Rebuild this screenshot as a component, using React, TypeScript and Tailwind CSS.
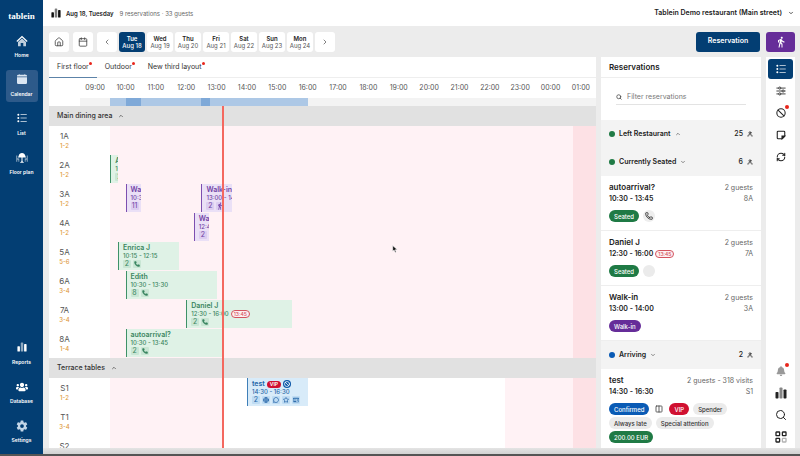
import type { ReactNode } from "react";
import {
  Ban,
  Calendar,
  ChevronDown,
  ChevronLeft,
  ChevronRight,
  ChevronUp,
  Columns2,
  Globe,
  House,
  MessageCircle,
  Phone,
  RefreshCw,
  Search,
  Star,
} from "lucide-react";
import { BsCalendarFill } from "react-icons/bs";
import { FaBell, FaRegIdCard, FaUsers } from "react-icons/fa";
import { FiUser } from "react-icons/fi";
import { IoSettingsSharp } from "react-icons/io5";
import { MdDirectionsWalk } from "react-icons/md";

type Tone = "green" | "purple" | "blue";

interface Booking {
  name: string;
  time: string;
  guests: number;
  start: number;
  end: number;
  tone: Tone;
  icons?: ReactNode;
  late?: string;
  vip?: boolean;
}

interface TableRow {
  name: string;
  seats: string;
  bookings?: Booking[];
}

const FIRST_HOUR = 9;
const HOURS = 17;
const NOW = 13.7;

const toneClasses: Record<Tone, string> = {
  green: "bg-[#dff2e6] text-[#3a8560]",
  purple: "bg-[#eae0f6] text-[#7142a5]",
  blue: "bg-[#d8ebf9] text-[#2566a8]",
};

const edgeClasses: Record<Tone, string> = {
  green: "bg-[#3f9168]",
  purple: "bg-[#7d4fb0]",
  blue: "bg-[#3f7fb8]",
};

const chipClasses: Record<Tone, string> = {
  green: "bg-[#c9e6d4]",
  purple: "bg-[#dccdf0]",
  blue: "bg-[#bfdcf3]",
};

const phone = <Phone className="size-1.5" fill="currentColor" />;

const mainTables: TableRow[] = [
  { name: "1A", seats: "1-2" },
  {
    name: "2A",
    seats: "1-2",
    bookings: [{ name: "A", time: "10:00", guests: 2, start: 10, end: 10.25, tone: "green" }],
  },
  {
    name: "3A",
    seats: "1-2",
    bookings: [
      { name: "Walk-in", time: "10:30 - 11:00", guests: 11, start: 10.5, end: 11, tone: "purple" },
      {
        name: "Walk-in",
        time: "13:00 - 14:00",
        guests: 2,
        start: 13,
        end: 14,
        tone: "purple",
        icons: <MdDirectionsWalk className="size-2" />,
      },
    ],
  },
  {
    name: "4A",
    seats: "1-2",
    bookings: [
      { name: "Walk-in", time: "12:45 - 13:15", guests: 2, start: 12.75, end: 13.25, tone: "purple" },
    ],
  },
  {
    name: "5A",
    seats: "5-6",
    bookings: [
      { name: "Enrica J", time: "10:15 - 12:15", guests: 2, start: 10.25, end: 12.25, tone: "green", icons: phone },
    ],
  },
  {
    name: "6A",
    seats: "3-4",
    bookings: [
      { name: "Edith", time: "10:30 - 13:30", guests: 8, start: 10.5, end: 13.5, tone: "green", icons: phone },
    ],
  },
  {
    name: "7A",
    seats: "3-4",
    bookings: [
      {
        name: "Daniel J",
        time: "12:30 - 16:00",
        guests: 2,
        start: 12.5,
        end: 16,
        tone: "green",
        icons: phone,
        late: "13:45",
      },
    ],
  },
  {
    name: "8A",
    seats: "1-4",
    bookings: [
      { name: "autoarrival?", time: "10:30 - 13:45", guests: 2, start: 10.5, end: NOW, tone: "green", icons: phone },
    ],
  },
];

const terraceTables: TableRow[] = [
  {
    name: "S1",
    seats: "1-2",
    bookings: [
      { name: "test", time: "14:30 - 16:30", guests: 2, start: 14.5, end: 16.5, tone: "blue", vip: true },
    ],
  },
  { name: "T1", seats: "3-4" },
  { name: "S2", seats: "1-2" },
];

const days = [
  ["Tue", "Aug 18"],
  ["Wed", "Aug 19"],
  ["Thu", "Aug 20"],
  ["Fri", "Aug 21"],
  ["Sat", "Aug 22"],
  ["Sun", "Aug 23"],
  ["Mon", "Aug 24"],
];

function span(start: number, end: number) {
  return {
    left: `${((start - FIRST_HOUR) / HOURS) * 100}%`,
    width: `${((end - start) / HOURS) * 100}%`,
  };
}

function BarsIcon({ className = "" }: { className?: string }) {
  return (
    <svg viewBox="0 0 12 12" className={className} fill="currentColor">
      <rect x="0.5" y="5" width="3" height="6.5" rx="0.8" />
      <rect x="4.5" y="0.5" width="3" height="11" rx="0.8" opacity="0.55" />
      <rect x="8.5" y="2.5" width="3" height="9" rx="0.8" />
    </svg>
  );
}

function ListIcon({ className = "" }: { className?: string }) {
  return (
    <svg viewBox="0 0 12 12" className={className} fill="currentColor">
      <circle cx="1.6" cy="2" r="1.2" />
      <circle cx="1.6" cy="6" r="1.2" />
      <circle cx="1.6" cy="10" r="1.2" />
      <rect x="4.2" y="1.6" width="7.5" height="0.8" />
      <rect x="4.2" y="5.6" width="7.5" height="0.8" />
      <rect x="4.2" y="9.6" width="7.5" height="0.8" />
    </svg>
  );
}

function HomeIcon({ className = "" }: { className?: string }) {
  return (
    <svg viewBox="0 0 12 12" className={className} fill="currentColor">
      <path d="M6 .8 11.6 6l-.8.9L6 2.6 1.2 6.9.4 6z" />
      <path d="M6 3.6 10 7v4.2H7.3V8H4.7v3.2H2V7z" opacity="0.75" />
    </svg>
  );
}

function FloorIcon({ className = "" }: { className?: string }) {
  return (
    <svg viewBox="0 0 12 12" className={className} fill="currentColor">
      <path d="M6 1c1.8 0 2.8 1 3.2 2.4L10 5.6H6.5v3.6l1.7 1.5H3.8l1.7-1.5V5.6H2l.8-2.2C3.2 2 4.2 1 6 1z" />
      <path d="M.4 3.5h.8v3h2v3.3h-.7V7.4H1.2v2.4H.4zM11.6 3.5h-.8v3h-2v3.3h.7V7.4h1.3v2.4h.8z" opacity="0.7" />
    </svg>
  );
}

function TilesIcon({ className = "" }: { className?: string }) {
  return (
    <svg viewBox="0 0 12 12" className={className} fill="none" stroke="currentColor" strokeWidth="1.3">
      <rect x="1" y="1" width="3.6" height="3.6" rx="0.4" />
      <rect x="7.4" y="1" width="3.6" height="3.6" rx="0.4" />
      <rect x="1" y="7.4" width="3.6" height="3.6" rx="0.4" />
      <rect x="7.4" y="7.4" width="3.6" height="3.6" rx="0.4" opacity="0.35" />
    </svg>
  );
}

function SlidersIcon({ className = "" }: { className?: string }) {
  return (
    <svg viewBox="0 0 12 12" className={className} fill="white" stroke="currentColor">
      <path d="M.5 2.5h11M.5 6h11M.5 9.5h11" />
      <circle cx="4.5" cy="2.5" r="1.3" />
      <circle cx="8.5" cy="6" r="1.3" />
      <circle cx="4.5" cy="9.5" r="1.3" />
    </svg>
  );
}

function NoteIcon({ className = "" }: { className?: string }) {
  return (
    <svg viewBox="0 0 12 12" className={className} fill="none" stroke="currentColor" strokeWidth="1.3">
      <path d="M1.5 2.5a1 1 0 0 1 1-1h7a1 1 0 0 1 1 1v5l-3 3h-5a1 1 0 0 1-1-1z" />
      <path d="M7.2 10.5V7.2h3.3z" fill="currentColor" />
    </svg>
  );
}

function NavItem({ icon, label, active }: { icon: ReactNode; label: string; active?: boolean }) {
  return (
    <button
      className={`flex h-8 w-8 flex-col items-center justify-between rounded-[3px] py-1 text-[5px] leading-2 font-semibold whitespace-nowrap text-white ${
        active ? "bg-[#2d5a8a]" : ""
      }`}
    >
      {icon}
      <span>{label}</span>
    </button>
  );
}

function Sidebar() {
  return (
    <nav className="flex w-[43px] shrink-0 flex-col items-center justify-between bg-[#033e73] pt-2 pb-1.5">
      <div className="flex flex-col items-center gap-[7px]">
        <div className="font-['Liberation_Serif',serif] text-[9px] leading-4 font-bold text-white">
          tablein
        </div>
        <NavItem icon={<HomeIcon className="size-3" />} label="Home" />
        <NavItem icon={<BsCalendarFill className="size-2.5 text-[#dbe6f2]" />} label="Calendar" active />
        <NavItem icon={<ListIcon className="size-2.5" />} label="List" />
        <NavItem icon={<FloorIcon className="size-3" />} label="Floor plan" />
      </div>
      <div className="flex flex-col items-center gap-[7px]">
        <NavItem icon={<BarsIcon className="size-2.5" />} label="Reports" />
        <NavItem icon={<FaUsers className="size-3" />} label="Database" />
        <NavItem icon={<IoSettingsSharp className="size-3 text-[#c3d6e8]" />} label="Settings" />
      </div>
    </nav>
  );
}

function TopBar() {
  return (
    <header className="flex h-[26px] shrink-0 items-center bg-white pr-1.5 pl-2 text-[6px]">
      <BarsIcon className="mr-[5px] size-2.5 text-[#111]" />
      <span className="font-semibold text-[#222]">Aug 18, Tuesday</span>
      <span className="ml-1.5 text-[#666]">9 reservations · 33 guests</span>
      <button className="ml-auto flex items-center gap-1.5 text-[7px] font-semibold text-[#222]">
        Tablein Demo restaurant (Main street)
        <ChevronDown className="size-1.5" strokeWidth={3} />
      </button>
    </header>
  );
}

function Toolbar() {
  const square = "grid size-5 place-items-center rounded-[3px] bg-white text-[#444]";
  return (
    <div className="flex h-[31px] shrink-0 items-center pr-[5px] pl-1.5">
      <button className={square} aria-label="Home">
        <House className="size-2.5" />
      </button>
      <button className={`${square} ml-1`} aria-label="Pick a date">
        <Calendar className="size-2.5" />
      </button>
      <div className="ml-1 flex gap-0.5">
        <button className={square} aria-label="Previous">
          <ChevronLeft className="size-2" />
        </button>
        {days.map(([day, date], i) => (
          <button
            key={date}
            className={`flex h-5 w-[26px] flex-col items-center justify-center rounded-[3px] text-[6px] leading-[7px] whitespace-nowrap ${
              i === 0 ? "bg-[#033e73] font-medium text-white" : "bg-white text-[#555]"
            }`}
          >
            <b className={i === 0 ? "font-semibold" : "font-semibold text-[#222]"}>{day}</b>
            <span>{date}</span>
          </button>
        ))}
        <button className={square} aria-label="Next">
          <ChevronRight className="size-2" />
        </button>
      </div>
      <button className="ml-auto h-5 w-16 rounded-[3px] bg-[#033e73] text-[7px] font-semibold text-white">
        Reservation
      </button>
      <button
        aria-label="Add walk-in"
        className="ml-1.5 grid h-5 w-[29px] place-items-center rounded-[3px] bg-[#662d99] text-white"
      >
        <MdDirectionsWalk className="size-3" />
      </button>
    </div>
  );
}

function Late({ children }: { children: ReactNode }) {
  return (
    <span className="rounded-full border border-[#d4545f] bg-[#fdf0f1] px-0.5 text-[5px] leading-1.5 font-medium text-[#d4545f]">
      {children}
    </span>
  );
}

function BookingCard({ booking }: { booking: Booking }) {
  const chip = `grid h-2 min-w-2 place-items-center rounded-[1px] ${chipClasses[booking.tone]}`;
  return (
    <div
      className={`absolute top-0 h-7 overflow-hidden pt-0.5 pl-[5px] text-[7px] leading-2 whitespace-nowrap ${toneClasses[booking.tone]}`}
      style={span(booking.start, booking.end)}
    >
      <i className={`absolute inset-y-0 left-0 w-px ${edgeClasses[booking.tone]}`} />
      <div className="flex items-center gap-0.5 font-semibold">
        {booking.name}
        {booking.vip && (
          <>
            <span className="rounded-full bg-[#d01030] px-[3px] text-[5px] leading-[7px] text-white">VIP</span>
            <span className="grid size-2 place-items-center rounded-full bg-[#0b57a8] text-white">
              <Ban className="size-1.5" strokeWidth={3} />
            </span>
          </>
        )}
      </div>
      <div className="flex items-center gap-0.5 text-[6px] font-medium">
        {booking.time}
        {booking.late && <Late>{booking.late}</Late>}
      </div>
      <div className="flex gap-0.5">
        <span className={chip}>{booking.guests}</span>
        {booking.icons && <span className={chip}>{booking.icons}</span>}
        {booking.vip && (
          <>
            <span className={chip}><Globe className="size-1.5" strokeWidth={3} /></span>
            <span className={chip}><MessageCircle className="size-1.5" strokeWidth={3} /></span>
            <span className={chip}><Star className="size-1.5" strokeWidth={3} /></span>
            <span className={chip}><FaRegIdCard className="size-1.5" /></span>
          </>
        )}
      </div>
    </div>
  );
}

interface Shade {
  start: number;
  end: number;
  className: string;
}

const mainShades: Shade[] = [
  { start: 10, end: 25.25, className: "bg-[#fff2f5]" },
  { start: 25.25, end: 26, className: "bg-[#fde1e5]" },
];

const terraceShades: Shade[] = [
  { start: 10, end: NOW, className: "bg-[#fff2f5]" },
  { start: 23, end: 25.25, className: "bg-[#fff2f5]" },
  { start: 25.25, end: 26, className: "bg-[#fde1e5]" },
];

function Area({ title, tables, shades }: { title: string; tables: TableRow[]; shades: Shade[] }) {
  return (
    <section>
      <button className="flex h-5 w-full items-center gap-1.5 bg-[#e1e1e1] px-2 text-[7px] font-medium text-[#333]">
        {title}
        <ChevronUp className="size-1.5" strokeWidth={2.5} />
      </button>
      {tables.map((table) => (
        <div key={table.name} className="flex h-[29px]">
          <div className="w-[31px] shrink-0 pt-1.5 text-center text-[8px] leading-[9px] text-[#555]">
            {table.name}
            <div className="text-[6px] font-medium text-[#e09a3e]">{table.seats}</div>
          </div>
          <div className="relative flex-1">
            {shades.map((shade) => (
              <div
                key={shade.start}
                className={`absolute inset-y-0 ${shade.className}`}
                style={span(shade.start, shade.end)}
              />
            ))}
            {table.bookings?.map((booking) => (
              <BookingCard key={booking.start} booking={booking} />
            ))}
          </div>
        </div>
      ))}
    </section>
  );
}

function Schedule() {
  const floors = ["First floor", "Outdoor", "New third layout"];
  return (
    <main className="flex min-w-0 flex-1 flex-col overflow-hidden bg-white">
      <div className="flex h-[21px] shrink-0 border-b border-[#eee] text-[7px] text-[#333]">
        {floors.map((floor, i) => (
          <button
            key={floor}
            className={`relative px-2 pt-px ${i === 0 ? "shadow-[0_1px_0_#5c83a8]" : ""}`}
          >
            {floor}
            <i className="absolute top-[5px] right-[5px] size-[3px] rounded-full bg-[#e8261c]" />
          </button>
        ))}
      </div>
      <div className="flex h-5 shrink-0 items-center pl-[31px] text-[7px] text-[#555]">
        {Array.from({ length: HOURS }, (_, i) => (
          <span key={i} className="flex w-0 flex-1 justify-center">
            {String((FIRST_HOUR + i) % 24).padStart(2, "0")}:00
          </span>
        ))}
      </div>
      <div className="flex h-2 shrink-0">
        <div className="w-[31px]" />
        <div className="relative flex-1 bg-[#f3f3f3]">
          <div className="absolute inset-y-0 bg-[#adc8e6]" style={span(10, 16.5)} />
          <div className="absolute inset-y-0 bg-[#7fa9d8]" style={span(10.5, 11)} />
          <div className="absolute inset-y-0 bg-[#7fa9d8]" style={span(13, 13.27)} />
        </div>
      </div>
      <div className="relative min-h-0 flex-1 overflow-hidden">
        <Area title="Main dining area" tables={mainTables} shades={mainShades} />
        <Area title="Terrace tables" tables={terraceTables} shades={terraceShades} />
        <div className="pointer-events-none absolute inset-y-0 right-0 left-[31px]">
          <div className="absolute inset-y-0 w-0.5 -translate-x-1/2 bg-[#f4685f]" style={{ left: span(NOW, NOW).left }} />
        </div>
      </div>
    </main>
  );
}

function GroupHeader({ color, title, count, open }: { color: string; title: string; count: number; open?: boolean }) {
  const Chevron = open ? ChevronDown : ChevronUp;
  return (
    <button className="flex h-7 w-full shrink-0 items-center bg-[#f3f3f3] px-2 text-[7px] font-semibold text-[#222]">
      <i className={`mr-1 size-1.5 rounded-full ${color}`} />
      {title}
      <Chevron className="ml-1 size-1.5" />
      <span className="ml-auto font-medium">{count}</span>
      <FiUser className="ml-1 size-1.5" strokeWidth={3} />
    </button>
  );
}

interface ReservationProps {
  name: string;
  time: string;
  info: string;
  table: string;
  late?: string;
  children: ReactNode;
}

function Reservation({ name, time, info, table, late, children }: ReservationProps) {
  return (
    <article className="shrink-0 border-b border-[#eee] px-2 pt-1.5 pb-2 text-[7px] leading-[11px]">
      <div className="flex justify-between">
        <b className="text-[8px] font-semibold text-[#222]">{name}</b>
        <span className="text-[#666]">{info}</span>
      </div>
      <div className="flex items-center gap-0.5">
        <span className="font-semibold text-[#222]">{time}</span>
        {late && <Late>{late}</Late>}
        <span className="ml-auto text-[#666]">{table}</span>
      </div>
      <div className="mt-1.5 flex flex-wrap gap-x-1 gap-y-0.5">{children}</div>
    </article>
  );
}

function Tag({ className, children }: { className: string; children: ReactNode }) {
  return (
    <span className={`flex h-3 items-center rounded-full px-[5px] text-[6px] font-medium ${className}`}>
      {children}
    </span>
  );
}

function ReservationPanel() {
  return (
    <aside className="flex w-40 shrink-0 flex-col overflow-hidden bg-white">
      <h2 className="h-[21px] shrink-0 border-b border-[#eee] px-2 text-[8px] leading-5 font-semibold text-[#222]">
        Reservations
      </h2>
      <label className="mx-[15px] mt-3 mb-[15px] flex h-[15px] shrink-0 items-center gap-[5px] border-b border-[#e3e3e3] text-[#444]">
        <Search className="size-1.5 shrink-0" strokeWidth={3} />
        <input
          aria-label="Filter reservations"
          placeholder="Filter reservations"
          className="w-full min-w-0 text-[7px] outline-none placeholder:text-[#777]"
        />
      </label>
      <GroupHeader color="bg-[#1f7a45]" title="Left Restaurant" count={25} />
      <GroupHeader color="bg-[#1f7a45]" title="Currently Seated" count={6} open />
      <Reservation name="autoarrival?" time="10:30 - 13:45" info="2 guests" table="8A">
        <Tag className="bg-[#1f7a45] text-white">Seated</Tag>
        <span className="grid size-3 place-items-center rounded-full bg-[#eee] text-[#222]">
          <Phone className="size-2" strokeWidth={2.5} />
        </span>
      </Reservation>
      <Reservation name="Daniel J" time="12:30 - 16:00" info="2 guests" table="7A" late="13:45">
        <Tag className="bg-[#1f7a45] text-white">Seated</Tag>
        <span className="size-3 rounded-full bg-[#ebebeb]" />
      </Reservation>
      <Reservation name="Walk-in" time="13:00 - 14:00" info="2 guests" table="3A">
        <Tag className="bg-[#662d99] text-white">Walk-in</Tag>
      </Reservation>
      <GroupHeader color="bg-[#0a5bb5]" title="Arriving" count={2} open />
      <Reservation name="test" time="14:30 - 16:30" info="2 guests - 318 visits" table="S1">
        <Tag className="bg-[#0a5bb5] text-white">Confirmed</Tag>
        <span className="grid size-3 place-items-center text-[#444]">
          <Columns2 className="size-2" strokeWidth={2.5} />
        </span>
        <Tag className="bg-[#d01030] text-white">VIP</Tag>
        <Tag className="bg-[#ebebeb] text-[#333]">Spender</Tag>
        <Tag className="bg-[#ebebeb] text-[#333]">Always late</Tag>
        <Tag className="bg-[#ebebeb] text-[#333]">Special attention</Tag>
        <Tag className="bg-[#1f7a45] text-white">200.00 EUR</Tag>
      </Reservation>
    </aside>
  );
}

function RailButton({ label, dot, children }: { label: string; dot?: boolean; children: ReactNode }) {
  return (
    <button aria-label={label} className="relative grid h-[22px] w-[25px] place-items-center text-[#222]">
      {children}
      {dot && <i className="absolute top-[3px] right-1 size-1 rounded-full bg-[#e8261c]" />}
    </button>
  );
}

function Rail() {
  return (
    <div className="flex w-[29px] shrink-0 flex-col items-center bg-white pt-0.5">
      <button aria-label="Reservations" className="mb-px grid h-5 w-[25px] place-items-center rounded-[3px] bg-[#033e73] text-white">
        <ListIcon className="size-2.5" />
      </button>
      <RailButton label="Filters"><SlidersIcon className="size-2.5" /></RailButton>
      <RailButton label="Blocks" dot><Ban className="size-2.5" strokeWidth={2.5} /></RailButton>
      <RailButton label="Notes"><NoteIcon className="size-2.5" /></RailButton>
      <RailButton label="Refresh"><RefreshCw className="size-2.5" strokeWidth={2.5} /></RailButton>
      <div className="mt-auto">
        <RailButton label="Notifications" dot><FaBell className="size-2.5 text-[#999]" /></RailButton>
        <RailButton label="Statistics"><BarsIcon className="size-3" /></RailButton>
        <RailButton label="Search"><Search className="size-3" /></RailButton>
        <RailButton label="Apps"><TilesIcon className="size-3" /></RailButton>
      </div>
    </div>
  );
}

export default function App() {
  return (
    <div className="flex h-screen overflow-hidden border-b-2 border-[#555] bg-[#ececec] font-['Inter','Liberation_Sans',sans-serif]">
      <Sidebar />
      <div className="flex min-w-0 flex-1 flex-col">
        <TopBar />
        <Toolbar />
        <div className="flex min-h-0 flex-1 gap-[5px] pr-[5px] pl-1.5">
          <Schedule />
          <ReservationPanel />
          <Rail />
        </div>
        <div className="h-1.5 shrink-0 bg-linear-to-b from-[#e4e4e4] to-[#d2d2d2]" />
      </div>
      {/* mouse pointer */}
      <svg viewBox="0 0 10 14" className="pointer-events-none absolute top-[245px] left-[392px] h-2 w-1.5">
        <path d="M1 1v10l2.5-2.2L5.2 13l1.9-.8-1.7-4H9z" fill="#111" stroke="#fff" />
      </svg>
    </div>
  );
}
